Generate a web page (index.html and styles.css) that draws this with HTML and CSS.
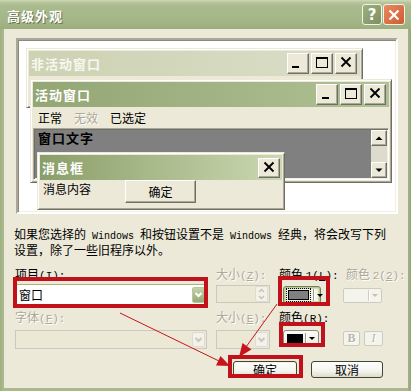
FILE: index.html
```html
<!DOCTYPE html>
<html>
<head>
<meta charset="utf-8">
<link rel="stylesheet" href="styles.css">
</head>
<body>
<div class="win">
  <div class="titlebar">
    <span class="ttext">高级外观</span>
    <span class="tb help">?</span>
    <span class="tb close"><svg width="12" height="12" viewBox="0 0 12 12"><path d="M1.5 1.5L10.5 10.5M10.5 1.5L1.5 10.5" stroke="#fff" stroke-width="2.2"/></svg></span>
  </div>
  <div class="body">
    <div class="preview">
      <div class="pwin inactive">
        <div class="ptitle ina">
          <span>非活动窗口</span>
          <div class="cbtns">
            <span class="cbtn"><svg width="20" height="19"><rect x="4" y="12" width="7" height="2" fill="#000"/></svg></span>
            <span class="cbtn"><svg width="20" height="19"><rect x="4.5" y="3.5" width="11" height="10" fill="none" stroke="#000"/><rect x="4" y="3" width="12" height="2" fill="#000"/></svg></span>
            <span class="cbtn"><svg width="20" height="19"><path d="M5.5 3.5L14.5 12.5M14.5 3.5L5.5 12.5" stroke="#000" stroke-width="1.8"/></svg></span>
          </div>
        </div>
      </div>
      <div class="pwin active">
        <div class="ptitle act">
          <span>活动窗口</span>
          <div class="cbtns">
            <span class="cbtn"><svg width="20" height="19"><rect x="5" y="12" width="7" height="2" fill="#000"/></svg></span>
            <span class="cbtn"><svg width="20" height="19"><rect x="4.5" y="3.5" width="11" height="10" fill="none" stroke="#000"/><rect x="4" y="3" width="12" height="2" fill="#000"/></svg></span>
            <span class="cbtn"><svg width="20" height="19"><path d="M5.5 3.5L14.5 12.5M14.5 3.5L5.5 12.5" stroke="#000" stroke-width="1.8"/></svg></span>
          </div>
        </div>
        <div class="menu"><span>正常</span><span class="mdis">无效</span><span>已选定</span></div>
        <div class="ta">
          <div class="tatext">窗口文字</div>
          <div class="sb">
            <span class="sbb"><svg width="14" height="14"><path d="M3.5 9L7 5.5L10.5 9Z" fill="#000"/></svg></span>
            <span class="track"></span>
            <span class="sbb"><svg width="14" height="14"><path d="M3.5 5.5L7 9L10.5 5.5Z" fill="#000"/></svg></span>
          </div>
        </div>
      </div>
      <div class="pwin msg">
        <div class="ptitle mt">
          <span>消息框</span>
          <div class="cbtns mcb">
            <span class="cbtn mx"><svg width="20" height="18"><path d="M5.5 3.5L14.5 12.5M14.5 3.5L5.5 12.5" stroke="#000" stroke-width="1.8"/></svg></span>
          </div>
        </div>
        <div class="mbody"><span class="mtext">消息内容</span><span class="mok">确定</span></div>
      </div>
    </div>

    <p class="note">如果您选择的<span class="m"> Windows </span>和按钮设置不是<span class="m"> Windows </span>经典，将会改写下列<br>设置，除了一些旧程序以外。</p>

    <div class="form">
      <div class="lbl">项目<span class="m">(<u>I</u>):</span></div>
      <div class="lbl dis">大小<span class="m">(<u>Z</u>):</span></div>
      <div class="lbl">颜色 <span class="m">1(<u>L</u>):</span></div>
      <div class="lbl dis c4l">颜色 <span class="m">2(<u>2</u>):</span></div>

      <div class="combo on"><span class="val">窗口</span><span class="dd dd-on"><svg width="11" height="15"><polyline points="2.5,6 5.5,9 8.5,6" fill="none" stroke="#fff" stroke-width="2"/></svg></span></div>
      <div class="spin"><span class="spv"></span><span class="spb"><svg width="11" height="16"><polyline points="3,6 5.5,3.5 8,6" fill="none" stroke="#c5c3b6" stroke-width="1.5"/><polyline points="3,10 5.5,12.5 8,10" fill="none" stroke="#c5c3b6" stroke-width="1.5"/></svg></span></div>
      <div class="colbtn c1"><span class="focus"><span class="sw gray"></span></span><span class="sep"></span><span class="arr"></span></div>
      <div class="colbtn c2"><span class="sw2"></span><span class="sep dsep"></span><span class="arr darr"></span></div>

      <div class="lbl dis lb2">字体<span class="m">(<u>F</u>):</span></div>
      <div class="lbl dis lb2">大小<span class="m">(<u>E</u>):</span></div>
      <div class="lbl lb2">颜色<span class="m">(<u>R</u>):</span></div>
      <div></div>

      <div class="combo off wide"><span class="val"></span><span class="dd dd-off"><svg width="11" height="15"><polyline points="2.5,6 5.5,9 8.5,6" fill="none" stroke="#c9c7bb" stroke-width="2"/></svg></span></div>
      <div class="combo off small"><span class="val"></span><span class="dd dd-off"><svg width="11" height="15"><polyline points="2.5,6 5.5,9 8.5,6" fill="none" stroke="#c9c7bb" stroke-width="2"/></svg></span></div>
      <div class="colbtn cr"><span class="sw black"></span><span class="sep"></span><span class="arr"></span></div>
      <div class="bi"><span class="sb1 bb">B</span><span class="sb1 ii">I</span></div>
    </div>

    <div class="btnrow">
      <span class="xpbtn okb">确定</span>
      <span class="xpbtn cnb">取消</span>
    </div>
  </div>

  <div class="rbox r1"></div>
  <div class="rbox r2"></div>
  <div class="rbox r3"></div>
  <div class="rbox r4"></div>
  <svg class="annot" width="411" height="391" viewBox="0 0 411 391">
    <line x1="120" y1="313" x2="219" y2="361" stroke="#c8141c" stroke-width="1"/>
    <polygon points="230,366 216,365.5 220.5,356" fill="#c8141c"/>
    <line x1="277" y1="304" x2="246" y2="347" stroke="#c8141c" stroke-width="1"/>
    <polygon points="239,357 251.5,349.5 242.5,343" fill="#c8141c"/>
  </svg>
</div>
</body>
</html>
```

FILE: styles.css
```css
* { box-sizing: border-box; margin: 0; padding: 0; }
html, body { width: 411px; height: 391px; overflow: hidden; background: #a8b88c; }
body {
  font-family: "Noto Sans CJK SC", "Noto Sans", sans-serif;
  font-size: 12px;
  color: #000;
}
.win {
  position: relative;
  width: 411px;
  height: 391px;
  display: flex;
  flex-direction: column;
  background: linear-gradient(90deg, #9eaf80, #a9b98d 3px, #a9b98d 407px, #93a475);
}
.titlebar {
  height: 29px;
  display: flex;
  align-items: center;
  padding: 0 6px 0 7px;
  background: linear-gradient(#d2dcb8 0, #b9c79e 2px, #aabb8e 6px, #a3b486 22px, #9cad7e 29px);
}
.ttext {
  color: #fff;
  font-weight: bold;
  font-size: 13px;
  letter-spacing: 1px;
  text-shadow: 1px 1px 0 #67764c;
  margin-top: 1px;
}
.tb {
  height: 21px;
  border: 1px solid #f2f3ea;
  border-radius: 3px;
  display: flex;
  align-items: center;
  justify-content: center;
  color: #fff;
  font-family: "DejaVu Sans", sans-serif;
  font-weight: bold;
  font-size: 15px;
}
.help {
  width: 20px;
  margin-left: auto;
  background: linear-gradient(135deg, #9fb07f, #7f8f60);
}
.close {
  width: 22px;
  margin-left: 1px;
  background: linear-gradient(135deg, #e98a62, #cf5a30);
}
.body {
  flex: 1;
  margin: 0 3px 3px 4px;
  background: #ece9d8;
  padding: 9px 0 0 11px;
}
.preview {
  position: relative;
  margin-left: 1px;
  width: 382px;
  height: 176px;
  background: #fff;
  border: 2px solid;
  border-color: #aca899 #fff #fff #aca899;
  box-shadow: inset 1px 1px #8d8a7c, inset -1px -1px #f1efe2;
}
.pwin {
  position: absolute;
  background: #ece9d8;
  border: 1px solid;
  border-color: #ece9d8 #716f64 #716f64 #ece9d8;
  box-shadow: inset 1px 1px #fff, inset -1px -1px #aca899;
  padding: 2px;
  display: flex;
  flex-direction: column;
}
.inactive { left: 8px; top: 8px; width: 337px; height: 60px; }
.active { left: 12px; top: 39px; width: 362px; height: 104px; }
.msg { left: 19px; top: 112px; width: 248px; height: 58px; }
.ptitle {
  height: 25px;
  flex: none;
  display: flex;
  align-items: center;
  padding-left: 2px;
  color: #fff;
  font-weight: bold;
  font-size: 13px;
  letter-spacing: 1px;
}
.ina { background: linear-gradient(90deg, #cdd2b3, #dadec8); color: #f7f7f0; }
.act { background: linear-gradient(90deg, #93a674, #b0c195); }
.mt { background: linear-gradient(90deg, #8a9e69, #cbd8b1); }
.cbtns { margin-left: auto; display: flex; gap: 2px; padding-right: 3px; }
.mcb { padding-right: 2px; }
.cbtn {
  width: 22px;
  height: 21px;
  background: #ece9d8;
  border: 1px solid;
  border-color: #fff #716f64 #716f64 #fff;
  box-shadow: inset -1px -1px #aca899;
  display: block;
}
.cbtn svg { display: block; }
.mx { height: 20px; }
.menu {
  height: 21px;
  flex: none;
  display: flex;
  align-items: center;
  gap: 12px;
  padding-left: 5px;
  font-size: 12px;
}
.mdis { color: #aca899; text-shadow: 1px 1px 0 #fff; }
.ta {
  height: 52px;
  flex: none;
  display: flex;
  background: #808080;
  border: 1px solid;
  border-color: #aca899 #fff #fff #aca899;
  box-shadow: inset 1px 1px #716f64, inset -1px -1px #f1efe2;
  padding: 1px;
}
.tatext {
  flex: 1;
  font-weight: bold;
  font-size: 13px;
  letter-spacing: 1px;
  line-height: 14px;
  padding: 1px 0 0 3px;
}
.sb { width: 16px; display: flex; flex-direction: column; }
.sbb {
  height: 16px;
  background: #ece9d8;
  border: 1px solid;
  border-color: #fff #716f64 #716f64 #fff;
  box-shadow: inset -1px -1px #aca899;
}
.sbb svg { display: block; }
.track { flex: 1; background: #dddbcc; }
.mbody {
  flex: 1;
  display: flex;
  align-items: flex-start;
  padding-left: 3px;
}
.mtext { line-height: 18px; }
.mok {
  margin-left: 34px;
  width: 71px;
  height: 23px;
  display: flex;
  align-items: center;
  justify-content: center;
  background: #ece9d8;
  border: 1px solid;
  border-color: #fff #716f64 #716f64 #fff;
  box-shadow: inset -1px -1px #aca899;
}
.note {
  margin-top: 13px;
  line-height: 13px;
  font-size: 12px;
  margin-left: -1px;
}
.m { font-family: "Liberation Mono", monospace; font-size: 10px; }
.form {
  margin-top: 11px;
  display: grid;
  grid-template-columns: 201px 63px 64px 1fr;
  grid-template-rows: 13px 27px 19px 25px;
}
.lbl { line-height: 13px; white-space: nowrap; font-size: 12px; }
.lbl .m { font-size: 11px; }
.c4l { padding-left: 3px; }
.dis { color: #aca899; text-shadow: 1px 1px 0 #fff; }
.lb2 { align-self: end; }
.combo {
  display: flex;
  align-items: center;
  border: 1px solid;
  padding: 0 1px 0 3px;
}
.combo.on {
  width: 192px;
  height: 21px;
  margin-top: 4px;
  background: #fff;
  border-color: #a5b97b;
}
.combo.off {
  height: 19px;
  margin-top: 4px;
  background: #ebe9d6;
  border-color: #cbc9bd;
}
.combo.wide { width: 192px; }
.combo.small { width: 54px; }
.val { flex: 1; }
.dd {
  width: 13px;
  height: 16px;
  border-radius: 2px;
  display: flex;
  align-items: center;
  justify-content: center;
}
.dd-on { background: linear-gradient(#c5d2a9, #96a872); border: 1px solid #b9c79c; }
.dd-off { background: #f3f2ea; border: 1px solid #dedcd2; height: 15px; }
.spin {
  width: 54px;
  height: 18px;
  margin-top: 5px;
  border: 1px solid #cbc9bd;
  background: #ebe9d6;
  display: flex;
  justify-content: flex-end;
  padding: 0 1px;
}
.spb {
  width: 13px;
  height: 16px;
  background: #f3f2ea;
  border: 1px solid #dedcd2;
  border-radius: 2px;
}
.spb svg { display: block; margin-top: -1px; }
.colbtn {
  display: flex;
  align-items: center;
  border: 1px solid;
  border-radius: 3px;
  padding: 0 2px;
}
.c1 {
  width: 38px;
  height: 18px;
  margin: 6px 0 0 4px;
  border-color: #6f8053;
  background: #f3f3ea;
  box-shadow: inset 0 0 0 1px #b9c897, inset 0 0 0 2px #cfdab2;
}
.c2 {
  width: 39px;
  height: 15px;
  margin-top: 8px;
  border-color: #cdcbc0;
  border-radius: 2px;
  background: #f4f3ec;
}
.cr {
  width: 36px;
  height: 17px;
  margin: 4px 0 0 4px;
  border-color: #8b8a80;
  background: linear-gradient(#fbfbf8, #eceae0);
}
.focus { border: 1px dotted #000; padding: 1px; display: flex; }
.sw { display: block; width: 21px; height: 10px; border: 1px solid #000; }
.gray { background: #808080; }
.black { background: #000; width: 20px; margin-left: 1px; }
.sw2 { flex: 1; }
.sep {
  width: 2px;
  height: 12px;
  border-left: 1px solid #9d9b90;
  border-right: 1px solid #fff;
  margin: 0 2px 0 2px;
}
.dsep { border-left-color: #cfcdc2; height: 11px; }
.arr {
  width: 0;
  height: 0;
  border-left: 3px solid transparent;
  border-right: 3px solid transparent;
  border-top: 3px solid #000;
  margin-right: 1px;
}
.darr { border-top-color: #c5c3b6; }
.bi { display: flex; gap: 4px; margin-top: 5px; }
.sb1 {
  width: 17px;
  height: 15px;
  border: 1px solid #cdcbc0;
  border-radius: 2px;
  background: #f4f3ec;
  color: #b8b6a9;
  font-family: "Liberation Serif", serif;
  font-size: 12px;
  display: flex;
  align-items: center;
  justify-content: center;
  text-shadow: 1px 1px 0 #fff;
}
.bb { font-weight: bold; }
.ii { font-style: italic; width: 19px; }
.btnrow {
  display: flex;
  gap: 14px;
  margin: 10px 0 0 218px;
}
.xpbtn {
  height: 17px;
  display: flex;
  align-items: center;
  justify-content: center;
  border: 1px solid #3e4732;
  border-radius: 3px;
  background: linear-gradient(#ffffff, #f4f3ee 60%, #dedbcc);
  font-size: 12px;
}
.okb { width: 64px; box-shadow: inset 0 0 0 1px #f7f3dc; }
.cnb { width: 72px; }
.rbox {
  position: absolute;
  border: 4px solid #c1121c;
  pointer-events: none;
}
.r1 { left: 13px; top: 277px; width: 195px; height: 31px; }
.r2 { left: 278px; top: 276px; width: 52px; height: 30px; }
.r3 { left: 279px; top: 322px; width: 46px; height: 25px; }
.r4 { left: 228px; top: 355px; width: 75px; height: 23px; }
.annot { position: absolute; left: 0; top: 0; pointer-events: none; }
```
